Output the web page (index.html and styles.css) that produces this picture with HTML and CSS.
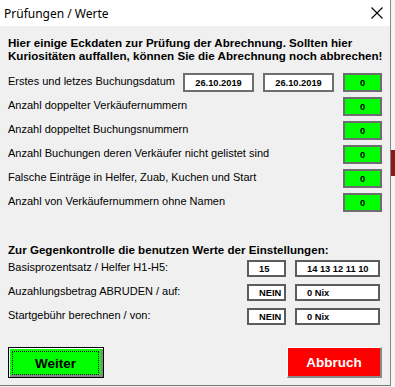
FILE: index.html
```html
<!DOCTYPE html>
<html>
<head>
  <meta charset="utf-8">
  <link rel="stylesheet" href="styles.css">
</head>
<body>
  <div class="window">
    <div class="titlebar">
      <span class="title">Prüfungen / Werte</span>
      <svg class="close" width="12" height="12" viewBox="0 0 12 12">
        <path d="M0.5 0.5 L11.5 11.5 M11.5 0.5 L0.5 11.5" stroke="#000" stroke-width="1.1" fill="none"/>
      </svg>
    </div>

    <div class="content">
      <p class="intro">Hier einige Eckdaten zur Prüfung der Abrechnung. Sollten hier<br>Kuriositäten auffallen, können Sie die Abrechnung noch abbrechen!</p>

      <div class="checks">
        <div class="row">
          <span class="label">Erstes und letzes Buchungsdatum</span>
          <span class="box date">26.10.2019</span>
          <span class="box date">26.10.2019</span>
          <span class="box ok">0</span>
        </div>
        <div class="row">
          <span class="label">Anzahl doppelter Verkäufernummern</span>
          <span class="box ok">0</span>
        </div>
        <div class="row">
          <span class="label">Anzahl doppeltet Buchungsnummern</span>
          <span class="box ok">0</span>
        </div>
        <div class="row">
          <span class="label">Anzahl Buchungen deren Verkäufer nicht gelistet sind</span>
          <span class="box ok">0</span>
        </div>
        <div class="row">
          <span class="label">Falsche Einträge in Helfer, Zuab, Kuchen und Start</span>
          <span class="box ok">0</span>
        </div>
        <div class="row">
          <span class="label">Anzahl von Verkäufernummern ohne Namen</span>
          <span class="box ok">0</span>
        </div>
      </div>

      <p class="subhead">Zur Gegenkontrolle die benutzen Werte der Einstellungen:</p>
      <div class="settings">
        <div class="row small">
          <span class="label">Basisprozentsatz / Helfer H1-H5:</span>
          <span class="box val short">15</span>
          <span class="box val long">14 13 12 11 10</span>
        </div>
        <div class="row small">
          <span class="label">Auzahlungsbetrag ABRUDEN / auf:</span>
          <span class="box val short">NEIN</span>
          <span class="box val long">0 Nix</span>
        </div>
        <div class="row small">
          <span class="label">Startgebühr berechnen / von:</span>
          <span class="box val short">NEIN</span>
          <span class="box val long">0 Nix</span>
        </div>
      </div>

      <div class="buttons">
        <button class="btn go" type="button"><span class="focus">Weiter</span></button>
        <button class="btn stop" type="button">Abbruch</button>
      </div>
    </div>
  </div>
  <div class="edge"></div>
</body>
</html>
```

FILE: styles.css
```css
body {
  margin: 0;
  background: #f3f3f3;
  font-family: "Liberation Sans", Arial, sans-serif;
  font-size: 11px;
  color: #000;
  position: relative;
}

.window {
  width: 391px;
  height: 386px;
  box-sizing: border-box;
  background: #f0f0f0;
  border-right: 1px solid #888;
  border-bottom: 1px solid #777;
}

.titlebar {
  height: 26px;
  background: #fff;
  display: flex;
  align-items: center;
  justify-content: space-between;
  padding: 0 6px 0 4px;
}
.title {
  font-family: "Noto Sans", sans-serif;
  font-size: 12px;
  margin-top: 1px;
}
.close { margin-right: 1px; }

.content {
  padding: 10px 0 0 8px;
}

.intro, .subhead {
  margin: 0;
  font-weight: bold;
  font-size: 11.6px;
  line-height: 13px;
  white-space: nowrap;
}

.checks {
  margin-top: 11px;
  display: flex;
  flex-direction: column;
  gap: 5px;
}

.row {
  display: flex;
  align-items: center;
  height: 19px;
}
.row .label {
  flex: 1;
  white-space: nowrap;
  margin-top: -3px;
}

.box {
  box-sizing: border-box;
  height: 19px;
  border: 2px solid #6e6e6e;
  background: #fff;
  font-weight: bold;
  font-size: 9.3px;
  display: flex;
  align-items: center;
  justify-content: center;
}
.box.date { width: 71px; margin-right: 9px; }
.box.ok { width: 39px; background: #00ff00; margin-right: 8px; }

.subhead { margin-top: 31px; }

.settings {
  margin-top: 4px;
  display: flex;
  flex-direction: column;
  gap: 7px;
}
.row.small { height: 17px; }
.box.val {
  height: 17px;
  border-color: #5c5c5c;
  justify-content: flex-start;
  padding-left: 10px;
}
.box.short { width: 39px; margin-right: 9px; }
.box.long { width: 85px; margin-right: 10px; }

.buttons {
  margin-top: 22px;
  display: flex;
  justify-content: space-between;
  padding-right: 8px;
}

.btn {
  box-sizing: border-box;
  height: 31px;
  padding: 0;
  font-family: "Liberation Sans", Arial, sans-serif;
  font-weight: bold;
  font-size: 13.5px;
}
.btn.go {
  width: 96px;
  background: #00ff00;
  border: 1px solid #000;
  box-shadow: inset 1px 1px 0 #fff, inset -2px -2px 0 #888;
  padding: 3px 4px 4px 3px;
  color: #000;
}
.btn.go .focus {
  display: flex;
  align-items: center;
  justify-content: center;
  height: 100%;
  border: 1px dotted #000;
}
.btn.stop {
  width: 95px;
  background: #ff0000;
  color: #fff;
  border: none;
  border-top: 1px solid #fff;
  border-left: 1px solid #fff;
  border-right: 2px solid #888;
  border-bottom: 2px solid #888;
}

.edge {
  position: absolute;
  left: 391px;
  top: 150px;
  width: 4px;
  height: 26px;
  background: #8b1a1a;
}
```
